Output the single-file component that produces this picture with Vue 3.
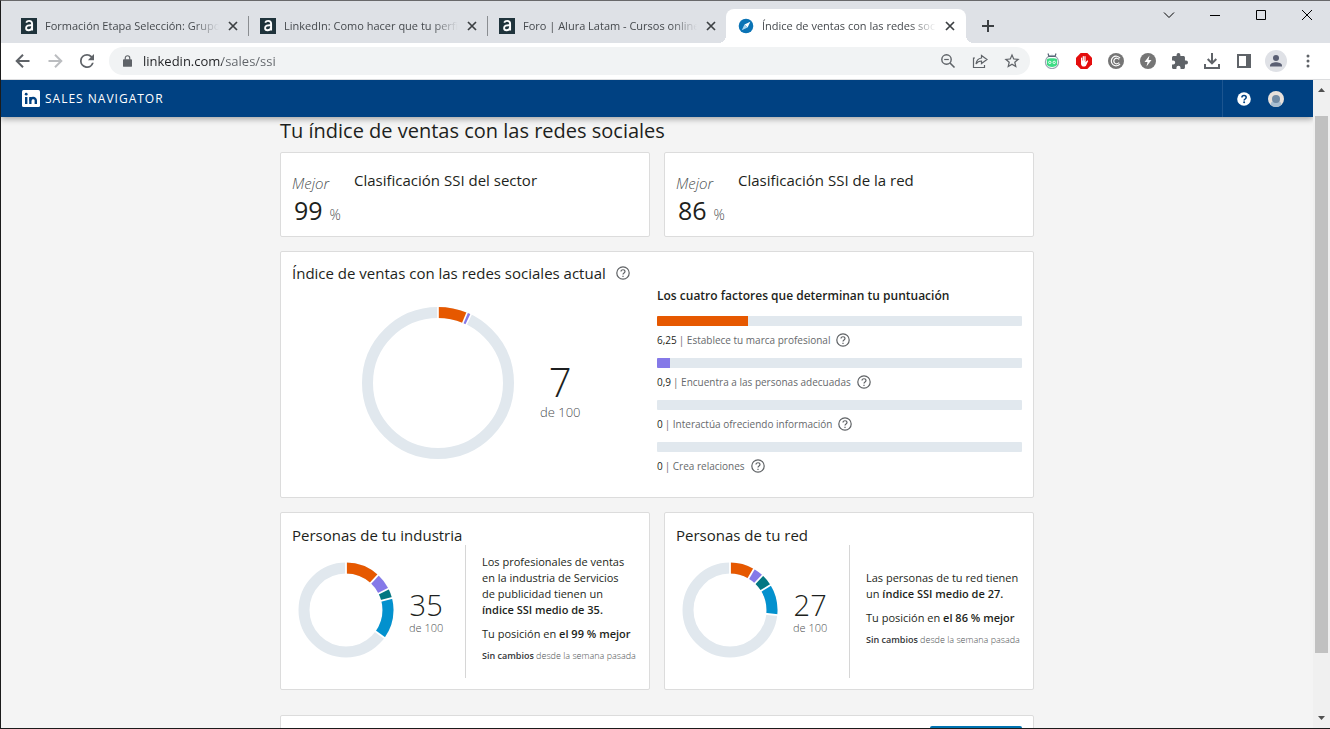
<script setup>
import { ref } from 'vue'

const tabs = [
  { title: 'Formación Etapa Selección: Grupo', icon: 'alura' },
  { title: 'LinkedIn: Como hacer que tu perfil', icon: 'alura' },
  { title: 'Foro | Alura Latam - Cursos online', icon: 'alura' },
  { title: 'Índice de ventas con las redes sociales', icon: 'compass', active: true },
]
const url = ref('linkedin.com/sales/ssi')

const ORANGE = '#e65800'
const PURPLE = '#8579e8'
const TEAL = '#037782'
const BLUE = '#0391ce'

const ranks = [
  { value: 99, label: 'Clasificación SSI del sector' },
  { value: 86, label: 'Clasificación SSI de la red' },
]

const factors = [
  { score: '6,25', points: 6.25, label: 'Establece tu marca profesional', color: ORANGE },
  { score: '0,9', points: 0.9, label: 'Encuentra a las personas adecuadas', color: PURPLE },
  { score: '0', points: 0, label: 'Interactúa ofreciendo información', color: TEAL },
  { score: '0', points: 0, label: 'Crea relaciones', color: BLUE },
]

const groups = [
  {
    title: 'Personas de tu industria',
    score: 35,
    rank: 99,
    intro: 'Los profesionales de ventas\nen la industria de Servicios\nde publicidad tienen un\n',
    parts: [[11.8, ORANGE], [5.8, PURPLE], [3.3, TEAL], [14.1, BLUE]],
  },
  {
    title: 'Personas de tu red',
    score: 27,
    rank: 86,
    intro: 'Las personas de tu red tienen\nun ',
    parts: [[8.4, ORANGE], [3.6, PURPLE], [4.2, TEAL], [10.5, BLUE]],
  },
]

function segments(parts) {
  let start = 0
  return parts.map(([size, color]) => {
    const s = { start, size, color }
    start += size
    return s
  })
}

function cuts(parts) {
  let at = 0
  return [0, ...parts.map(([size]) => (at += size))].map((p) => p * 3.6)
}

const mainParts = [[6.25, ORANGE], [0.9, PURPLE]]
</script>

<template>
  <div class="window">
    <header class="tabstrip">
      <div class="tabs" role="tablist">
        <div v-for="t in tabs" :key="t.title" class="tab" :class="{ active: t.active }" role="tab">
          <svg v-if="t.icon === 'alura'" class="favicon" viewBox="0 0 16 16" aria-hidden="true">
            <rect width="16" height="16" fill="#1f333b" />
            <path d="M5.2 4.6c.6-1.3 1.600-1.700 2.900-1.700 2 0 3 1 3 2.900v6.700M11 7.300c-3.500-.3-5.900.3-5.900 2.700 0 1.500 1 2.300 2.400 2.300 2 0 3.500-1.300 3.500-3.100" fill="none" stroke="#fff" stroke-width="1.900" />
          </svg>
          <svg v-else class="favicon" viewBox="0 0 16 16" aria-hidden="true">
            <circle cx="8" cy="8" r="7.300" fill="#0a73b5" />
            <path d="M12.300 3.700 9.600 9.500 6.500 6.400z" fill="#fff" />
            <path d="M3.700 12.300 6.500 6.400l3.100 3.100z" fill="#a9d4ee" />
          </svg>
          <span class="tab-title">{{ t.title }}</span>
          <button class="tab-close" aria-label="Cerrar pestaña">
            <svg viewBox="0 0 10 10" width="10" height="10"><path d="M1 1l8 8M9 1L1 9" stroke="#3c4043" stroke-width="1.700" /></svg>
          </button>
        </div>
        <button class="new-tab" aria-label="Nueva pestaña">
          <svg viewBox="0 0 12 12" width="12" height="12"><path d="M6 0v12M0 6h12" stroke="#3c4043" stroke-width="2" /></svg>
        </button>
      </div>
      <div class="window-controls">
        <button aria-label="Buscar pestañas"><svg viewBox="0 0 12 12" width="12" height="12"><path d="M1 3.500l5 5 5-5" /></svg></button>
        <button aria-label="Minimizar"><svg viewBox="0 0 12 12" width="12" height="12"><path d="M1 6.500h10" /></svg></button>
        <button aria-label="Maximizar"><svg viewBox="0 0 12 12" width="12" height="12"><path d="M1.500 1.500h9v9h-9z" /></svg></button>
        <button aria-label="Cerrar"><svg viewBox="0 0 12 12" width="12" height="12"><path d="M1 1l10 10M11 1L1 11" /></svg></button>
      </div>
    </header>

    <div class="toolbar">
      <button class="tool" aria-label="Atrás">
        <svg viewBox="0 0 16 16" width="16" height="16"><path d="M14.500 8H2M8 1.700 1.700 8 8 14.300" fill="none" stroke="#5f6368" stroke-width="2" /></svg>
      </button>
      <button class="tool" aria-label="Adelante" disabled>
        <svg viewBox="0 0 16 16" width="16" height="16"><path d="M1.500 8H14M8 1.700 14.300 8 8 14.300" fill="none" stroke="#bbbdc0" stroke-width="2" /></svg>
      </button>
      <button class="tool" aria-label="Recargar">
        <svg viewBox="4 4 16 16" width="14" height="14"><path d="M17.650 6.350A7.960 7.960 0 0 0 12 4a8 8 0 1 0 7.730 10h-2.080A6 6 0 1 1 12 6c1.660 0 3.140.690 4.220 1.780L13 11h7V4z" fill="#5f6368" /></svg>
      </button>
      <div class="omnibox">
        <svg class="lock" viewBox="0 0 10 13" width="9" height="12" aria-hidden="true">
          <rect y="4.500" width="10" height="8.500" rx="1" fill="#5f6368" />
          <path d="M2.500 5V3.200a2.500 2.500 0 0 1 5 0V5" fill="none" stroke="#5f6368" stroke-width="1.300" />
        </svg>
        <input v-model="url" class="address" type="text" aria-label="Dirección" spellcheck="false" />
        <button class="tool" aria-label="Zoom">
          <svg viewBox="0 0 16 16" width="16" height="16" fill="none" stroke="#5f6368"><circle cx="6.500" cy="6.500" r="4.700" stroke-width="1.400" /><path d="M10 10l4.500 4.500" stroke-width="1.600" /><path d="M4.200 6.500h4.600" stroke-width="1.200" /></svg>
        </button>
        <button class="tool" aria-label="Compartir">
          <svg viewBox="0 0 16 16" width="16" height="16" fill="none" stroke="#5f6368" stroke-width="1.200"><path d="M3 5H1.500v9.500h11V12" /><path d="M9.500 2.500 15 6.500l-5.500 4V8C7 8 5.300 9 4 11c.4-3.300 2.300-5.500 5.500-6z" /></svg>
        </button>
        <button class="tool" aria-label="Añadir a marcadores">
          <svg viewBox="1.500 1.500 21 21" width="16" height="16"><path d="M22 9.240l-7.190-.62L12 2 9.190 8.630 2 9.240l5.460 4.730L5.820 21 12 17.270 18.180 21l-1.630-7.030zM12 15.400l-3.760 2.270 1-4.280-3.320-2.880 4.380-.38L12 6.100l1.710 4.040 4.380.38-3.320 2.880 1 4.280z" fill="#5f6368" /></svg>
        </button>
      </div>
      <div class="extensions">
        <button class="tool" aria-label="Extensión Android">
          <svg viewBox="0 0 16 16" width="16" height="16"><circle cx="8" cy="9" r="6.600" fill="#fff" stroke="#9aa6b2" stroke-width="1.200" /><path d="M5 3.500 4 .5M11 3.500l1-3" stroke="#596475" stroke-width="1.200" /><path d="M4.500 3.500h7" stroke="#596475" /><path d="M2.800 6.500c1-1.800 9.400-1.800 10.400 0l-.2 5c-1 3.300-9 3.300-10 0z" fill="#3ddc84" /><g fill="#3ddc84" stroke="#fff" stroke-width=".9"><circle cx="5.800" cy="9.400" r="1.200" /><circle cx="10.200" cy="9.400" r="1.200" /></g></svg>
        </button>
        <button class="tool" aria-label="Bloqueador de anuncios">
          <svg viewBox="0 0 16 16" width="16" height="16"><path d="M4.700 0h6.600L16 4.700v6.600L11.300 16H4.700L0 11.300V4.700z" fill="#e40d0d" /><path d="M5.600 8V5M7.300 7.500v-4M9 7.500v-4" stroke="#fff" stroke-width="1.200" stroke-linecap="round" /><path d="M5 7.500h4.600v1.700l1.700-1.900.9.700-2 4.200c-.5 1-1.200 1.400-2.200 1.400-2 0-3-1.200-3-3.100z" fill="#fff" /></svg>
        </button>
        <button class="tool" aria-label="Extensión C">
          <svg viewBox="0 0 16 16" width="16" height="16"><circle cx="8" cy="8" r="8" fill="#757575" /><path d="M12 5.200A4.800 4.800 0 1 0 12 10.800" fill="none" stroke="#fff" stroke-width="1.200" /><path d="M11 6.500a2.800 2.800 0 1 0 0 3" fill="none" stroke="#fff" stroke-width="1.200" /></svg>
        </button>
        <button class="tool" aria-label="Extensión rayo">
          <svg viewBox="0 0 16 16" width="16" height="16"><circle cx="8" cy="8" r="8" fill="#757575" /><path d="M9.500 2.500 4.500 9h3l-1 4.500 5-6.500h-3z" fill="#fff" /></svg>
        </button>
        <button class="tool" aria-label="Extensiones">
          <svg viewBox="2 1 21 21" width="16" height="16"><path d="M20.500 11H19V7c0-1.100-.9-2-2-2h-4V3.500a2.500 2.500 0 0 0-5 0V5H4c-1.100 0-2 .9-2 2v3.800h1.500a2.700 2.700 0 0 1 0 5.400H2V20c0 1.100.9 2 2 2h3.800v-1.500a2.700 2.700 0 0 1 5.400 0V22H17c1.100 0 2-.9 2-2v-4h1.500a2.500 2.500 0 0 0 0-5z" fill="#5f6368" /></svg>
        </button>
        <button class="tool" aria-label="Descargas">
          <svg viewBox="0 0 16 16" width="16" height="16" fill="none" stroke="#5f6368" stroke-width="2"><path d="M8 0v10M3.700 6 8 10.300 12.300 6M1 11v4h14v-4" /></svg>
        </button>
        <button class="tool" aria-label="Panel lateral">
          <svg viewBox="0 0 14 14" width="14" height="14"><path d="M1 1h12v12H1z" fill="none" stroke="#5f6368" stroke-width="2" /><path d="M9 0h5v14H9z" fill="#5f6368" /></svg>
        </button>
        <button class="tool profile" aria-label="Perfil">
          <svg viewBox="0 0 22 22" width="22" height="22"><circle cx="11" cy="11" r="11" fill="#dfe1e6" /><circle cx="11" cy="8" r="3" fill="#5a5f73" /><path d="M5 16.500v-1c0-2 3.500-3.200 6-3.200s6 1.200 6 3.200v1z" fill="#5a5f73" /></svg>
        </button>
        <button class="tool" aria-label="Menú">
          <svg viewBox="0 0 4 14" width="4" height="14" fill="#5f6368"><circle cx="2" cy="2" r="1.500" /><circle cx="2" cy="7" r="1.500" /><circle cx="2" cy="12" r="1.500" /></svg>
        </button>
      </div>
    </div>

    <div class="viewport">
      <div class="page">
        <nav class="sales-nav">
          <a class="brand" href="#">
            <svg viewBox="0 0 18 17" width="18" height="17" aria-hidden="true"><rect width="18" height="17" rx="1.500" fill="#fff" /><g fill="#004182"><path d="M3 7h2.400v7H3zM7.200 7h2.300v7H7.200z" /><circle cx="4.200" cy="4.200" r="1.400" /></g><path d="M8.500 10.500c0-3 5.300-3.500 5.300 0V14" fill="none" stroke="#004182" stroke-width="2.400" /></svg>
            <span>SALES NAVIGATOR</span>
          </a>
          <div class="nav-actions">
            <button aria-label="Ayuda">
              <svg viewBox="0 0 14 14" width="14" height="14"><circle cx="7" cy="7" r="6.800" fill="#fff" /><path d="M4.900 5.600c0-2.700 4.300-2.700 4.300 0 0 1.400-2.100 1.400-2.100 2.900" fill="none" stroke="#004182" stroke-width="1.500" /><circle cx="7.100" cy="10.300" r="1" fill="#004182" /></svg>
            </button>
            <button aria-label="Tu cuenta">
              <svg viewBox="0 0 16 16" width="16" height="16"><circle cx="8" cy="8" r="8" fill="#e8e1db" /><path d="M2.300 13.600c1-3 3-4 5.700-4s4.700 1 5.700 4A8 8 0 0 1 8 16a8 8 0 0 1-5.700-2.400z" fill="#a9bed1" /><circle cx="8" cy="8" r="4" fill="#718ba5" /></svg>
            </button>
          </div>
        </nav>

        <main class="content">
          <h1>Tu índice de ventas con las redes sociales</h1>

          <div class="pair">
            <section v-for="r in ranks" :key="r.label" class="card rank">
              <div class="rank-score">
                <em>Mejor</em>
                <p><strong>{{ r.value }}</strong> <span>%</span></p>
              </div>
              <h2>{{ r.label }}</h2>
            </section>
          </div>

          <section class="card current">
            <div class="current-left">
              <h2 class="with-help">
                Índice de ventas con las redes sociales actual
                <button class="help" aria-label="Más información"><svg viewBox="0 0 14 14" width="14" height="14"><circle cx="7" cy="7" r="6.200" /><path d="M5 5.600c0-2.500 4-2.500 4 0C9 7 7 7 7 8.500" /><path d="M7 9.700v1.300" /></svg></button>
              </h2>
              <div class="current-chart">
                <svg class="donut-large" viewBox="0 0 152 152" role="img" aria-label="7 de 100">
                  <g transform="rotate(-90 76 76)" fill="none" stroke-width="11">
                    <circle cx="76" cy="76" r="70.500" stroke="#e1e8ee" />
                    <circle v-for="s in segments(mainParts)" :key="s.color" cx="76" cy="76" r="70.500" pathLength="100" :stroke="s.color" :stroke-dasharray="`${s.size} ${100 - s.size}`" :stroke-dashoffset="-s.start" />
                  </g>
                  <path v-for="a in cuts(mainParts)" :key="a" d="M76 -1v14" stroke="#fff" stroke-width="1.600" :transform="`rotate(${a} 76 76)`" />
                </svg>
                <p class="total large"><strong>7</strong><span>de 100</span></p>
              </div>
            </div>
            <div class="factors">
              <h3>Los cuatro factores que determinan tu puntuación</h3>
              <div v-for="f in factors" :key="f.label" class="factor">
                <div class="bar"><div class="fill" :style="{ width: f.points * 4 + '%', background: f.color }"></div></div>
                <p><b>{{ f.score }}</b> | {{ f.label }}
                  <button class="help" aria-label="Más información"><svg viewBox="0 0 14 14" width="14" height="14"><circle cx="7" cy="7" r="6.200" /><path d="M5 5.600c0-2.500 4-2.500 4 0C9 7 7 7 7 8.500" /><path d="M7 9.700v1.300" /></svg></button>
                </p>
              </div>
            </div>
          </section>

          <div class="pair">
            <section v-for="g in groups" :key="g.title" class="card group">
              <h2>{{ g.title }}</h2>
              <div class="group-body">
                <div class="group-chart">
                  <svg class="donut-small" viewBox="0 0 96 96" role="img" :aria-label="`${g.score} de 100`">
                    <g transform="rotate(-90 48 48)" fill="none" stroke-width="11">
                      <circle cx="48" cy="48" r="42" stroke="#e1e8ee" />
                      <circle v-for="s in segments(g.parts)" :key="s.color" cx="48" cy="48" r="42" pathLength="100" :stroke="s.color" :stroke-dasharray="`${s.size} ${100 - s.size}`" :stroke-dashoffset="-s.start" />
                    </g>
                    <path v-for="a in cuts(g.parts)" :key="a" d="M48 -1v14" stroke="#fff" stroke-width="1.800" :transform="`rotate(${a} 48 48)`" />
                  </svg>
                  <p class="total"><strong>{{ g.score }}</strong><span>de 100</span></p>
                </div>
                <div class="group-text">
                  <p class="intro">{{ g.intro }}<b>índice SSI medio de {{ g.score }}.</b></p>
                  <p>Tu posición en <b>el {{ g.rank }} % mejor</b></p>
                  <p class="change"><b>Sin cambios</b> desde la semana pasada</p>
                </div>
              </div>
            </section>
          </div>

          <section class="card cta"><a href="#" class="cta-button" aria-label="Más información"></a></section>
        </main>
      </div>

      <div class="scrollbar" aria-hidden="true">
        <svg viewBox="0 0 7 4" width="7" height="4"><path d="M0 4l3.500-4L7 4z" fill="#505050" /></svg>
        <div class="thumb"></div>
        <svg viewBox="0 0 7 4" width="7" height="4"><path d="M0 0l3.500 4L7 0z" fill="#505050" /></svg>
      </div>
    </div>
  </div>
</template>

<style>
body {
  margin: 0;
}
</style>

<style scoped>
.window {
  box-sizing: border-box;
  height: 100vh;
  display: flex;
  flex-direction: column;
  overflow: hidden;
  border: 1px solid #1b1b1b;
  border-top-color: #69696b;
  border-right: 0;
  background: #fff;
  color: #1d1f20;
  font-family: "Open Sans", "Noto Sans", sans-serif;
}
h1, h2, h3, p {
  margin: 0;
  font-weight: 400;
}
button {
  display: flex;
  align-items: center;
  justify-content: center;
  flex: none;
  padding: 0;
  border: 0;
  background: none;
  font: inherit;
}
svg {
  display: block;
  flex: none;
}

.tabstrip {
  display: flex;
  flex: none;
  justify-content: space-between;
  height: 42px;
  background: #dee1e6;
}
.tabs {
  display: flex;
  align-items: flex-end;
  padding-left: 8px;
}
.tab {
  box-sizing: border-box;
  position: relative;
  display: flex;
  align-items: center;
  width: 239px;
  height: 34px;
  padding: 0 7px 0 12px;
  color: #45494d;
}
.tab:nth-child(-n + 2)::after {
  content: "";
  position: absolute;
  right: -1px;
  top: 7px;
  width: 1px;
  height: 20px;
  background: #8a8d91;
}
.tab.active {
  width: 240px;
  padding-right: 8px;
  background: #fff;
  border-radius: 8px 8px 0 0;
}
.tab.active::before,
.tab.active::after {
  content: "";
  position: absolute;
  bottom: 0;
  width: 8px;
  height: 8px;
}
.tab.active::before {
  right: 100%;
  background: radial-gradient(circle at 0 0, transparent 8px, #fff 8px);
}
.tab.active::after {
  left: 100%;
  background: radial-gradient(circle at 100% 0, transparent 8px, #fff 8px);
}
.favicon {
  width: 16px;
  height: 16px;
}
.tab-title {
  flex: 1;
  margin: 0 4px 0 8px;
  overflow: hidden;
  white-space: nowrap;
  font-size: 11px;
  line-height: 18px;
  mask-image: linear-gradient(90deg, #000 calc(100% - 28px), transparent calc(100% - 2px));
}
.tab-close {
  width: 16px;
  height: 16px;
}
.new-tab {
  width: 28px;
  height: 34px;
  margin-left: 8px;
}
.window-controls {
  display: flex;
}
.window-controls button {
  width: 46px;
  height: 28px;
}
.window-controls svg {
  fill: none;
  stroke: #000;
}

.toolbar {
  display: flex;
  align-items: center;
  flex: none;
  height: 36px;
  padding: 0 6px;
  border-bottom: 1px solid #dcdddf;
}
.tool {
  width: 32px;
  height: 28px;
}
.omnibox {
  display: flex;
  align-items: center;
  flex: 1;
  height: 28px;
  margin: 0 6px;
  padding: 0 2px 0 14px;
  border-radius: 14px;
  background: #f1f3f4;
}
.lock {
  margin-right: 11px;
}
.address {
  flex: 1;
  min-width: 0;
  padding: 0;
  border: 0;
  outline: 0;
  font: 13px/20px "Open Sans", "Noto Sans", sans-serif;
  color: transparent;
  background: linear-gradient(90deg, #202124 79px, #5f6368 79px);
  background-clip: text;
}
.extensions {
  display: flex;
}

.viewport {
  display: flex;
  flex: 1;
  min-height: 0;
}
.page {
  flex: 1;
  min-width: 0;
  overflow: hidden;
  background: #f4f4f4;
}
.sales-nav {
  position: relative;
  display: flex;
  justify-content: space-between;
  height: 37px;
  background: #004182;
  box-shadow: 0 2px 6px rgba(0, 0, 0, 0.35);
}
.brand {
  display: flex;
  align-items: center;
  gap: 5px;
  padding-left: 21px;
  color: #fff;
  font-size: 12px;
  letter-spacing: 1px;
  text-decoration: none;
}
.nav-actions {
  display: flex;
  padding: 0 21px 0 5px;
  border-left: 1px solid #1c5590;
}
.nav-actions button {
  width: 32px;
}

.content {
  max-width: 754px;
  margin: 0 auto;
}
h1 {
  padding-bottom: 8px;
  font-size: 20px;
  line-height: 27px;
}
h2 {
  font-size: 15px;
  line-height: 20px;
}
.card {
  box-sizing: border-box;
  border: 1px solid #dcdcdc;
  border-radius: 2px;
  background: #fff;
}
.pair {
  display: grid;
  grid-template-columns: repeat(2, minmax(0, 1fr));
  gap: 14px;
}
.rank {
  display: flex;
  gap: 10px;
  padding: 17px 11px 10px;
}
.rank-score {
  width: 52px;
  padding-top: 2px;
}
.rank-score em {
  display: block;
  font-size: 15px;
  font-weight: 300;
  line-height: 22px;
  color: #4c4f51;
}
.rank-score p {
  display: flex;
  align-items: baseline;
  gap: 7px;
  padding-left: 2px;
}
.rank-score strong {
  font-size: 25px;
  font-weight: 400;
  line-height: 32px;
}
.rank-score span {
  font-size: 14px;
  font-weight: 300;
  line-height: 16px;
  color: #4c4f51;
}

.current {
  display: grid;
  grid-template-columns: 365px 1fr;
  margin: 14px 0;
  padding: 11px 11px 13px;
}
.with-help {
  display: flex;
  align-items: center;
  gap: 10px;
  white-space: nowrap;
}
.help svg {
  fill: none;
  stroke: #5f6265;
  stroke-width: 1.2;
}
.current-chart {
  display: flex;
  align-items: center;
  padding: 24px 0 0 70px;
}
.donut-large {
  width: 152px;
  height: 152px;
}
.total {
  display: flex;
  flex-direction: column;
  align-items: center;
  color: #4c4f51;
}
.total strong {
  color: #1d1f20;
  font-size: 29px;
  font-weight: 300;
  line-height: 30px;
}
.total span {
  font-size: 11px;
  font-weight: 300;
  line-height: 15px;
}
.total.large {
  margin-left: 26px;
  padding-top: 16px;
}
.total.large strong {
  font-size: 40px;
  line-height: 42px;
}
.total.large span {
  font-size: 13px;
  line-height: 18px;
}
.factors {
  padding-top: 23px;
}
.factors h3 {
  margin-bottom: 10px;
  font-size: 12px;
  font-weight: 600;
  line-height: 20px;
}
.factor {
  height: 42px;
}
.bar {
  height: 10px;
  overflow: hidden;
  border-radius: 1px;
  background: #e1e8ee;
}
.fill {
  height: 100%;
}
.factor p {
  display: flex;
  align-items: center;
  gap: 2px;
  padding-top: 6px;
  font-size: 10px;
  line-height: 16px;
  color: #66696c;
}
.factor b {
  font-weight: 400;
  color: #1d1f20;
}
.factor .help {
  margin-left: 4px;
}

.group {
  padding: 12px 11px 11px;
}
.group-body {
  display: flex;
  height: 133px;
}
.group-chart {
  box-sizing: border-box;
  display: flex;
  align-items: center;
  width: 174px;
  padding: 0 0 4px 6px;
  border-right: 1px solid #d6d6d6;
}
.donut-small {
  width: 96px;
  height: 96px;
}
.group-chart .total {
  margin-left: 15px;
  padding-top: 6px;
}
.group-text {
  flex: 1;
  align-self: center;
  padding: 0 0 7px 16px;
  font-size: 11px;
  line-height: 16px;
}
.group-text p {
  margin-bottom: 8px;
}
.group-text .intro {
  white-space: pre-line;
}
.group-text b {
  font-weight: 600;
}
.group-text .change {
  margin-bottom: 0;
  font-size: 9px;
  font-weight: 300;
  line-height: 12px;
  color: #4c4f51;
  white-space: nowrap;
}
.group-text .change b {
  color: #333638;
}
.cta {
  display: flex;
  justify-content: flex-end;
  margin-top: 25px;
  padding: 10px 11px;
}
.cta-button {
  width: 92px;
  height: 32px;
  border-radius: 2px;
  background: #0073b1;
}

.scrollbar {
  box-sizing: border-box;
  display: flex;
  flex-direction: column;
  align-items: center;
  width: 17px;
  padding: 8px 0;
  background: #f0f0f0;
}
.thumb {
  width: 13px;
  height: 85%;
  margin: 24px 0 auto;
  background: #c1c1c1;
}
</style>
